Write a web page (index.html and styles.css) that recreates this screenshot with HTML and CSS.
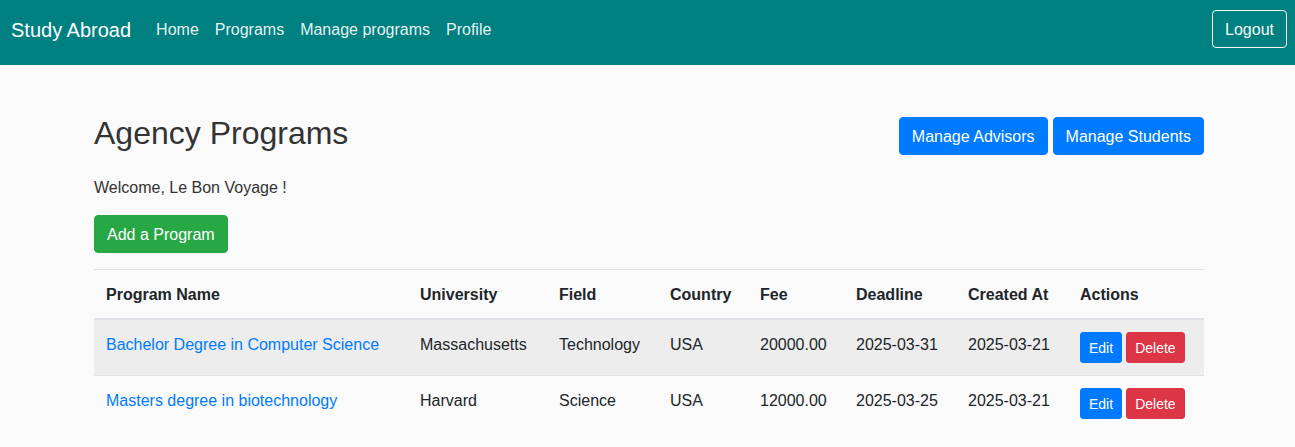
FILE: index.html
```html
<!DOCTYPE html>
<html lang="en">
<head>
<meta charset="utf-8">
<title>Agency Programs</title>
<link rel="stylesheet" href="styles.css">
</head>
<body>
<nav class="navbar">
  <div class="nav-left">
    <a class="brand" href="#">Study Abroad</a>
    <ul class="nav-links">
      <li><a href="#">Home</a></li>
      <li><a href="#">Programs</a></li>
      <li><a href="#">Manage programs</a></li>
      <li><a href="#">Profile</a></li>
    </ul>
  </div>
  <button class="btn btn-outline-light">Logout</button>
</nav>

<main class="container">
  <div class="page-head">
    <h2 class="title">Agency Programs</h2>
    <div class="head-actions">
      <button class="btn btn-primary">Manage Advisors</button>
      <button class="btn btn-primary">Manage Students</button>
    </div>
  </div>
  <p class="welcome">Welcome, Le Bon Voyage !</p>
  <button class="btn btn-success add-btn">Add a Program</button>

  <table class="table">
    <colgroup>
      <col class="c-name"><col class="c-uni"><col class="c-field"><col class="c-country">
      <col class="c-fee"><col class="c-deadline"><col class="c-created"><col class="c-actions">
    </colgroup>
    <thead>
      <tr>
        <th>Program Name</th><th>University</th><th>Field</th><th>Country</th>
        <th>Fee</th><th>Deadline</th><th>Created At</th><th>Actions</th>
      </tr>
    </thead>
    <tbody>
      <tr class="striped">
        <td><a href="#">Bachelor Degree in Computer Science</a></td>
        <td>Massachusetts</td><td>Technology</td><td>USA</td><td>20000.00</td>
        <td>2025-03-31</td><td>2025-03-21</td>
        <td class="actions"><button class="btn btn-sm btn-primary">Edit</button><button class="btn btn-sm btn-danger">Delete</button></td>
      </tr>
      <tr>
        <td><a href="#">Masters degree in biotechnology</a></td>
        <td>Harvard</td><td>Science</td><td>USA</td><td>12000.00</td>
        <td>2025-03-25</td><td>2025-03-21</td>
        <td class="actions"><button class="btn btn-sm btn-primary">Edit</button><button class="btn btn-sm btn-danger">Delete</button></td>
      </tr>
    </tbody>
  </table>
</main>
</body>
</html>
```

FILE: styles.css
```css
* { box-sizing: border-box; }

body {
  margin: 0;
  background: #fafafa;
  color: #212529;
  font-family: "Liberation Sans", Arial, sans-serif;
  font-size: 16px;
  line-height: 1.5;
}

a { text-decoration: none; }

.navbar {
  background: #008080;
  height: 65px;
  display: flex;
  justify-content: space-between;
  align-items: flex-start;
  padding: 9px 8px 0 11px;
}

.nav-left {
  display: flex;
  align-items: center;
}

.brand {
  color: #fff;
  font-size: 20px;
  line-height: 30px;
  padding: 6px 0 4px;
  margin-right: 17px;
}

.nav-links {
  list-style: none;
  margin: 0;
  padding: 0;
  display: flex;
}

.nav-links a {
  display: block;
  padding: 9px 8px 7px;
  color: rgba(255, 255, 255, 0.92);
  line-height: 24px;
}

.btn {
  font-family: inherit;
  font-size: 16px;
  line-height: 24px;
  padding: 7px 12px 5px;
  border: 1px solid transparent;
  border-radius: 4px;
  color: #fff;
  cursor: pointer;
}

.btn-outline-light {
  background: transparent;
  border-color: #f8f9fa;
  color: #f8f9fa;
  margin-top: 1px;
}

.btn-primary { background: #007bff; border-color: #007bff; }
.btn-success { background: #28a745; border-color: #28a745; }
.btn-danger { background: #dc3545; border-color: #dc3545; }

.btn-sm {
  font-size: 14px;
  line-height: 21px;
  padding: 5px 8px 3px;
  border-radius: 3px;
}

.container {
  max-width: 1140px;
  margin: 48px auto 0;
  padding: 0 13.5px 0 16.5px;
}

.page-head {
  display: flex;
  justify-content: space-between;
  align-items: center;
  margin-bottom: 16px;
}

.title {
  margin: 0 0 7px;
  padding-top: 1px;
  font-size: 32px;
  font-weight: 500;
  line-height: 1.2;
  color: #333;
}

.head-actions {
  display: flex;
  gap: 5px;
}

.welcome {
  margin: 0 0 15px;
  padding-top: 1px;
  color: #333;
}

.add-btn {
  display: block;
  margin-bottom: 16px;
}

.table {
  width: 100%;
  border-collapse: collapse;
  table-layout: fixed;
}

.c-name { width: 314px; }
.c-uni { width: 139px; }
.c-field { width: 111px; }
.c-country { width: 90px; }
.c-fee { width: 96px; }
.c-deadline { width: 112px; }
.c-created { width: 112px; }
.c-actions { width: 136px; }

.table th,
.table td {
  text-align: left;
  vertical-align: top;
  padding: 13px 12px 11px;
  border-top: 1px solid #dee2e6;
  white-space: nowrap;
}

.table td.actions {
  padding-top: 12px;
  padding-bottom: 12px;
}

.table thead th {
  font-weight: 700;
  border-bottom: 2px solid #dee2e6;
}

.table tr.striped td {
  background: rgba(0, 0, 0, 0.05);
}

.table td a { color: #007bff; }

.actions .btn + .btn { margin-left: 4px; }
```
